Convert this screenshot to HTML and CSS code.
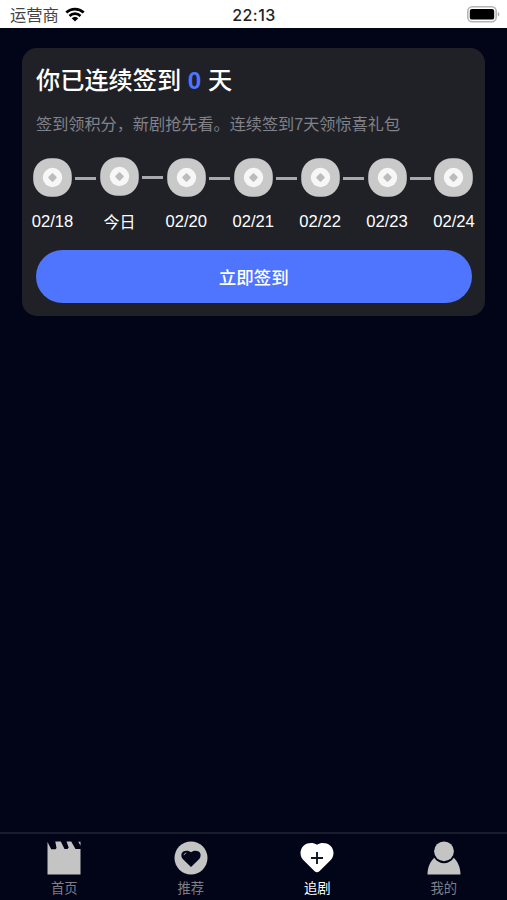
FILE: index.html
```
<!DOCTYPE html>
<html lang="zh-CN">
<head>
    <meta charset="UTF-8">
    <meta name="viewport" content="width=device-width, initial-scale=1.0">
    <title>签到</title>
    <link rel="stylesheet" href="styles.css">
</head>
<body>
    <svg class="defs">
        <symbol id="coin" viewBox="0 0 39 39">
            <rect x=".2" y=".2" width="38.600" height="38.600" rx="17.500" fill="#c9c9c9"/>
            <circle cx="19.500" cy="19.500" r="9.700" fill="#f7f7f7"/>
            <path d="M19.500 16.300l3.200 3.200-3.200 3.200-3.200-3.200z" fill="#bcbcbc" stroke="#bcbcbc" stroke-width="2" stroke-linejoin="round"/>
        </symbol>
    </svg>

    <header class="status">
        <div class="carrier">
            <span>运营商</span>
            <svg class="wifi" viewBox="0 0 20 15">
                <path d="M1.300 5.600a12.600 12.600 0 0 1 17.400 0M4.500 8.900a8 8 0 0 1 11 0" fill="none" stroke="#000" stroke-width="2.700"/>
                <path d="M10 14.400L6.700 11.300a4.800 4.800 0 0 1 6.600 0z"/>
            </svg>
        </div>
        <div class="time">22:13</div>
        <div class="power">
            <svg class="battery" viewBox="0 0 33 17">
                <rect x=".8" y=".8" width="28.400" height="14.900" rx="4.500" fill="#fff" stroke="#b4b4b4" stroke-width="1.600"/>
                <rect x="2.800" y="2.900" width="24.400" height="10.700" rx="2.200"/>
                <path d="M30.800 6v4.500q1.500-.6 1.500-2.250T30.800 6z" fill="#aaa"/>
            </svg>
        </div>
    </header>

    <main>
        <section class="card">
            <h1>你已连续签到 <span class="count">0</span> 天</h1>
            <p class="tip">签到领积分，新剧抢先看。连续签到7天领惊喜礼包</p>
            <div class="days">
                <div class="day"><svg class="coin"><use href="#coin"/></svg><span>02/18</span></div>
                <i class="line"></i>
                <div class="day today"><svg class="coin"><use href="#coin"/></svg><span>今日</span></div>
                <i class="line up"></i>
                <div class="day"><svg class="coin"><use href="#coin"/></svg><span>02/20</span></div>
                <i class="line"></i>
                <div class="day"><svg class="coin"><use href="#coin"/></svg><span>02/21</span></div>
                <i class="line"></i>
                <div class="day"><svg class="coin"><use href="#coin"/></svg><span>02/22</span></div>
                <i class="line"></i>
                <div class="day"><svg class="coin"><use href="#coin"/></svg><span>02/23</span></div>
                <i class="line"></i>
                <div class="day"><svg class="coin"><use href="#coin"/></svg><span>02/24</span></div>
            </div>
            <button class="sign">立即签到</button>
        </section>
    </main>

    <nav class="tabs">
        <a class="tab">
            <svg viewBox="0 0 34 34">
                <path d="M.5 1l3.700 7.300h4.300L9.500 7 8.300.5h5.500L17.500 8h3l1.200-1.500L19.500.5h4.700L28.500 8h5v25.500H.5zM31.300.8h2.200v4z"/>
            </svg>
            <span>首页</span>
        </a>
        <a class="tab">
            <svg viewBox="0 0 34 34">
                <circle cx="17" cy="17" r="16.500"/>
                <path d="M17 26L9 18.200C6.600 15.800 7 12.200 9.200 10.600c2.400-1.500 6-1.100 7.800.6 1.800-1.700 5.400-2.100 7.800-.6 2.200 1.600 2.600 5.200.2 7.600z" fill="#03061a"/>
                <path d="M10 14.200q.3-1.900 2.300-2.200" fill="none" stroke="#c4c4c4" stroke-width=".8"/>
            </svg>
            <span>推荐</span>
        </a>
        <a class="tab active">
            <svg viewBox="0 0 34 34">
                <path d="M14.600 30.300L3 18.700C-.7 14.400-.2 8 3.900 4.500 7.900 1.400 13.200 1.400 17 3.800 20.800 1.400 26.100 1.400 30.100 4.500c4.100 3.500 4.600 9.900.9 14.200L19.400 30.300q-2.400 2-4.800 0z"/>
                <path d="M17 11v12M11 17h12" fill="none" stroke="#111522" stroke-width="1.900"/>
            </svg>
            <span>追剧</span>
        </a>
        <a class="tab">
            <svg viewBox="0 0 34 34">
                <circle cx="17" cy="10.300" r="9.900"/>
                <path d="M7.300 16.800C3.200 20.600.5 26.500.5 33.500h33c0-7-2.700-12.900-6.800-16.700-4.600 7.300-14.800 7.300-19.400 0z"/>
            </svg>
            <span>我的</span>
        </a>
    </nav>
</body>
</html>
```
FILE: styles.css
```
* {
    box-sizing: border-box;
}
body {
    display: flex;
    flex-direction: column;
    height: 900px;
    margin: 0;
    background: #020517;
    color: #fff;
    font-family: "Liberation Sans", "Noto Sans CJK SC", sans-serif;
}
.defs {
    position: absolute;
    width: 0;
    height: 0;
}
.status {
    display: grid;
    grid-template-columns: 1fr auto 1fr;
    align-items: center;
    height: 28px;
    padding: 1px 7px 0 10px;
    background: #fff;
    color: #222;
    font-size: 16.300px;
    line-height: 26px;
}
.carrier {
    display: flex;
    align-items: center;
    gap: 6px;
    color: #444;
}
.wifi {
    width: 20px;
    height: 15px;
}
.time {
    margin-left: -2px;
    font-family: Inter, sans-serif;
    font-size: 16px;
    font-weight: 500;
    letter-spacing: 0.5px;
}
.power {
    display: flex;
    justify-content: flex-end;
}
.battery {
    width: 33px;
    height: 17px;
}
main {
    flex: 1;
    padding: 20px 22px;
}
.card {
    height: 268px;
    padding: 15px 13.500px 0 14px;
    background: #202127;
    border-radius: 15px;
}
h1 {
    margin: 0;
    font-size: 24.200px;
    font-weight: 500;
    line-height: 36px;
}
.count {
    color: #4f74fd;
    font-weight: bold;
}
.tip {
    margin: 13px 0 0;
    color: #828288;
    font-size: 16.150px;
    line-height: 24px;
    white-space: nowrap;
}
.days {
    display: flex;
    justify-content: space-between;
    height: 80px;
    margin: 22px -4px 0 -5px;
}
.day {
    display: flex;
    flex-direction: column;
    align-items: center;
    width: 43px;
    font-size: 16.600px;
    line-height: 24px;
}
.coin {
    width: 39px;
    height: 39px;
    margin-bottom: 13px;
}
.today {
    margin-top: -1px;
    font-size: 16px;
}
.today .coin {
    margin-bottom: 15px;
}
.line {
    width: 21px;
    height: 3px;
    margin-top: 19px;
    background: #a9a9ad;
}
.line.up {
    margin-top: 18px;
}
.sign {
    display: block;
    width: 100%;
    height: 53px;
    margin-top: 12px;
    padding: 0 0 1px;
    border: none;
    border-radius: 27px;
    background: #4f74fd;
    color: #fff;
    font-family: inherit;
    font-size: 17.500px;
    font-weight: 500;
}
.tabs {
    display: flex;
    height: 68px;
    padding-left: 1px;
    border-top: 2px solid #191c2c;
}
.tab {
    flex: 1;
    display: flex;
    flex-direction: column;
    align-items: center;
    padding-top: 7px;
    color: #7d7e88;
    font-size: 13.300px;
    line-height: 20px;
}
.tab svg {
    width: 34px;
    height: 34px;
    margin-bottom: 4px;
    fill: #c4c4c4;
}
.tab.active {
    color: #fff;
}
.tab.active svg {
    fill: #fff;
}
```
